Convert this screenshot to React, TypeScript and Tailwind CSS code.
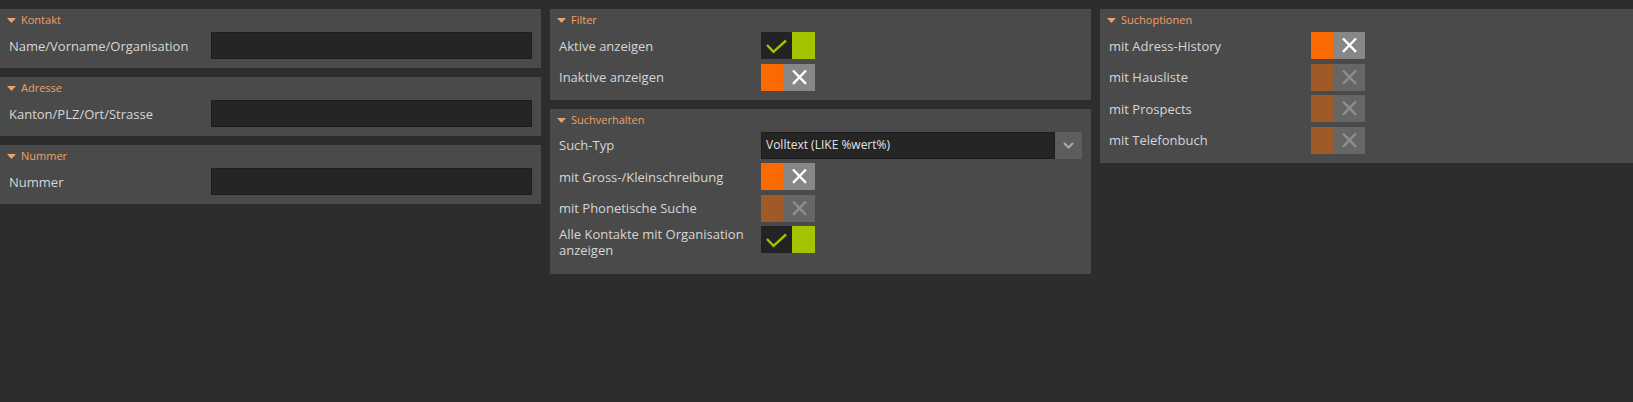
import type { ReactNode } from 'react'
import clsx from 'clsx'

const font = { fontFamily: '"Open Sans", "Noto Sans", sans-serif' }

function Caret() {
  return (
    <svg width="9" height="5" viewBox="0 0 9 5" className="shrink-0">
      <path d="M0 0H9L4.5 5Z" fill="#f0a067" />
    </svg>
  )
}

function Panel({ title, children }: { title: string; children: ReactNode }) {
  return (
    <section className="bg-[#4a4a4a] pb-[9px]">
      <header className="flex h-[23px] items-center gap-[5px] px-[7px] text-[11px] text-[#f0a067]">
        <Caret />
        <span>{title}</span>
      </header>
      <div className="flex flex-col gap-[4.5px] px-[9px]">{children}</div>
    </section>
  )
}

function Row({ label, children, tall }: { label: string; children: ReactNode; tall?: boolean }) {
  return (
    <div className={clsx('flex', tall ? 'items-start' : 'h-[27px] items-center')}>
      <span
        className={clsx(
          'w-[202px] shrink-0 pr-2 text-[13px] leading-[16px] text-[#d6d6d6]',
          tall && 'pb-[7px]',
        )}
      >
        {label}
      </span>
      {children}
    </div>
  )
}

function TextInput() {
  return <input type="text" className="h-[27px] flex-1 border border-[#1d1d1d] bg-[#252525] outline-none" />
}

function Toggle({ on, disabled }: { on?: boolean; disabled?: boolean }) {
  if (on) {
    return (
      <div className="flex h-[27px] w-[54px] shrink-0">
        <span className="flex w-[31px] items-center justify-center bg-[#232323]">
          <svg width="31" height="27" viewBox="0 0 31 27">
            <path d="M6 13L12.5 19.8L25 8.5" fill="none" stroke="#a4c400" strokeWidth="2.4" />
          </svg>
        </span>
        <span className="w-[23px] bg-[#a5c400]" />
      </div>
    )
  }
  return (
    <div className="flex h-[27px] w-[54px] shrink-0">
      <span className={clsx('w-[22px]', disabled ? 'bg-[#a05a28]' : 'bg-[#fb6a00]')} />
      <span className={clsx('flex w-[32px] items-center justify-center', disabled ? 'bg-[#666666]' : 'bg-[#878787]')}>
        <svg width="32" height="27" viewBox="0 0 32 27">
          <path
            d="M10 6.5L23 19.8M23 6.5L10 19.8"
            fill="none"
            stroke={disabled ? '#8e8e8e' : '#ffffff'}
            strokeWidth="2.4"
          />
        </svg>
      </span>
    </div>
  )
}

function Select({ value }: { value: string }) {
  return (
    <div className="flex h-[27px] flex-1">
      <div className="flex flex-1 items-center border border-[#1d1d1d] bg-[#252525] pl-[4px] text-[12px] text-[#e2e2e2]">
        {value}
      </div>
      <div className="flex w-[27px] items-center justify-center bg-[#5d5d5d]">
        <svg width="11" height="7" viewBox="0 0 11 7">
          <path d="M1 1L5.5 5.5L10 1" fill="none" stroke="#a9a9a9" strokeWidth="2.2" />
        </svg>
      </div>
    </div>
  )
}

export default function App() {
  return (
    <div className="min-h-[402px] bg-[#2d2d2d] pt-[9px]" style={font}>
      <div className="grid grid-cols-[541px_541px_1fr] items-start gap-x-[9px]">
        <div className="flex flex-col gap-[9px]">
          <Panel title="Kontakt">
            <Row label="Name/Vorname/Organisation">
              <TextInput />
            </Row>
          </Panel>
          <Panel title="Adresse">
            <Row label="Kanton/PLZ/Ort/Strasse">
              <TextInput />
            </Row>
          </Panel>
          <Panel title="Nummer">
            <Row label="Nummer">
              <TextInput />
            </Row>
          </Panel>
        </div>

        <div className="flex flex-col gap-[9px]">
          <Panel title="Filter">
            <Row label="Aktive anzeigen">
              <Toggle on />
            </Row>
            <Row label="Inaktive anzeigen">
              <Toggle />
            </Row>
          </Panel>
          <Panel title="Suchverhalten">
            <Row label="Such-Typ">
              <Select value="Volltext (LIKE %wert%)" />
            </Row>
            <Row label="mit Gross-/Kleinschreibung">
              <Toggle />
            </Row>
            <Row label="mit Phonetische Suche">
              <Toggle disabled />
            </Row>
            <Row label="Alle Kontakte mit Organisation anzeigen" tall>
              <Toggle on />
            </Row>
          </Panel>
        </div>

        <div className="flex flex-col gap-[9px]">
          <Panel title="Suchoptionen">
            <Row label="mit Adress-History">
              <Toggle />
            </Row>
            <Row label="mit Hausliste">
              <Toggle disabled />
            </Row>
            <Row label="mit Prospects">
              <Toggle disabled />
            </Row>
            <Row label="mit Telefonbuch">
              <Toggle disabled />
            </Row>
          </Panel>
        </div>
      </div>
    </div>
  )
}
